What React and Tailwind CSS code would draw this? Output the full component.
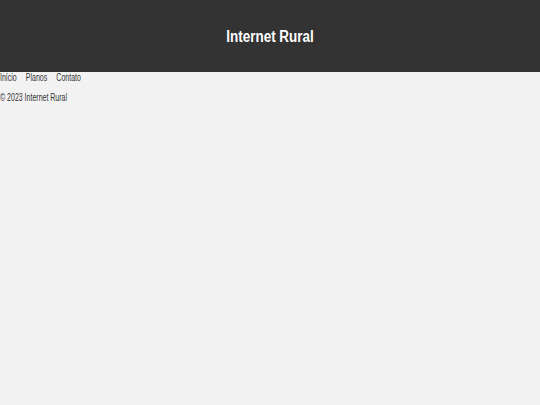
export default function App() {
  return (
    <div className="min-h-[405px] bg-[#f2f2f2] text-[#333] font-['Liberation_Sans',Arial,sans-serif]">
      <header className="h-[72px] bg-[#333] text-white flex items-center justify-center pt-[1px]">
        <h1 className="inline-block text-[16px] font-bold leading-none scale-x-[0.84]">Internet Rural</h1>
      </header>
      <nav className="flex">
        <div className="flex gap-[13px] text-[10px] leading-[12px] origin-left scale-x-[0.7]">
          <a>Início</a>
          <a>Planos</a>
          <a>Contato</a>
        </div>
      </nav>
      <footer className="flex mt-[8px]">
        <p className="text-[10px] leading-[12px] origin-left scale-x-[0.7]">© 2023 Internet Rural</p>
      </footer>
    </div>
  );
}
